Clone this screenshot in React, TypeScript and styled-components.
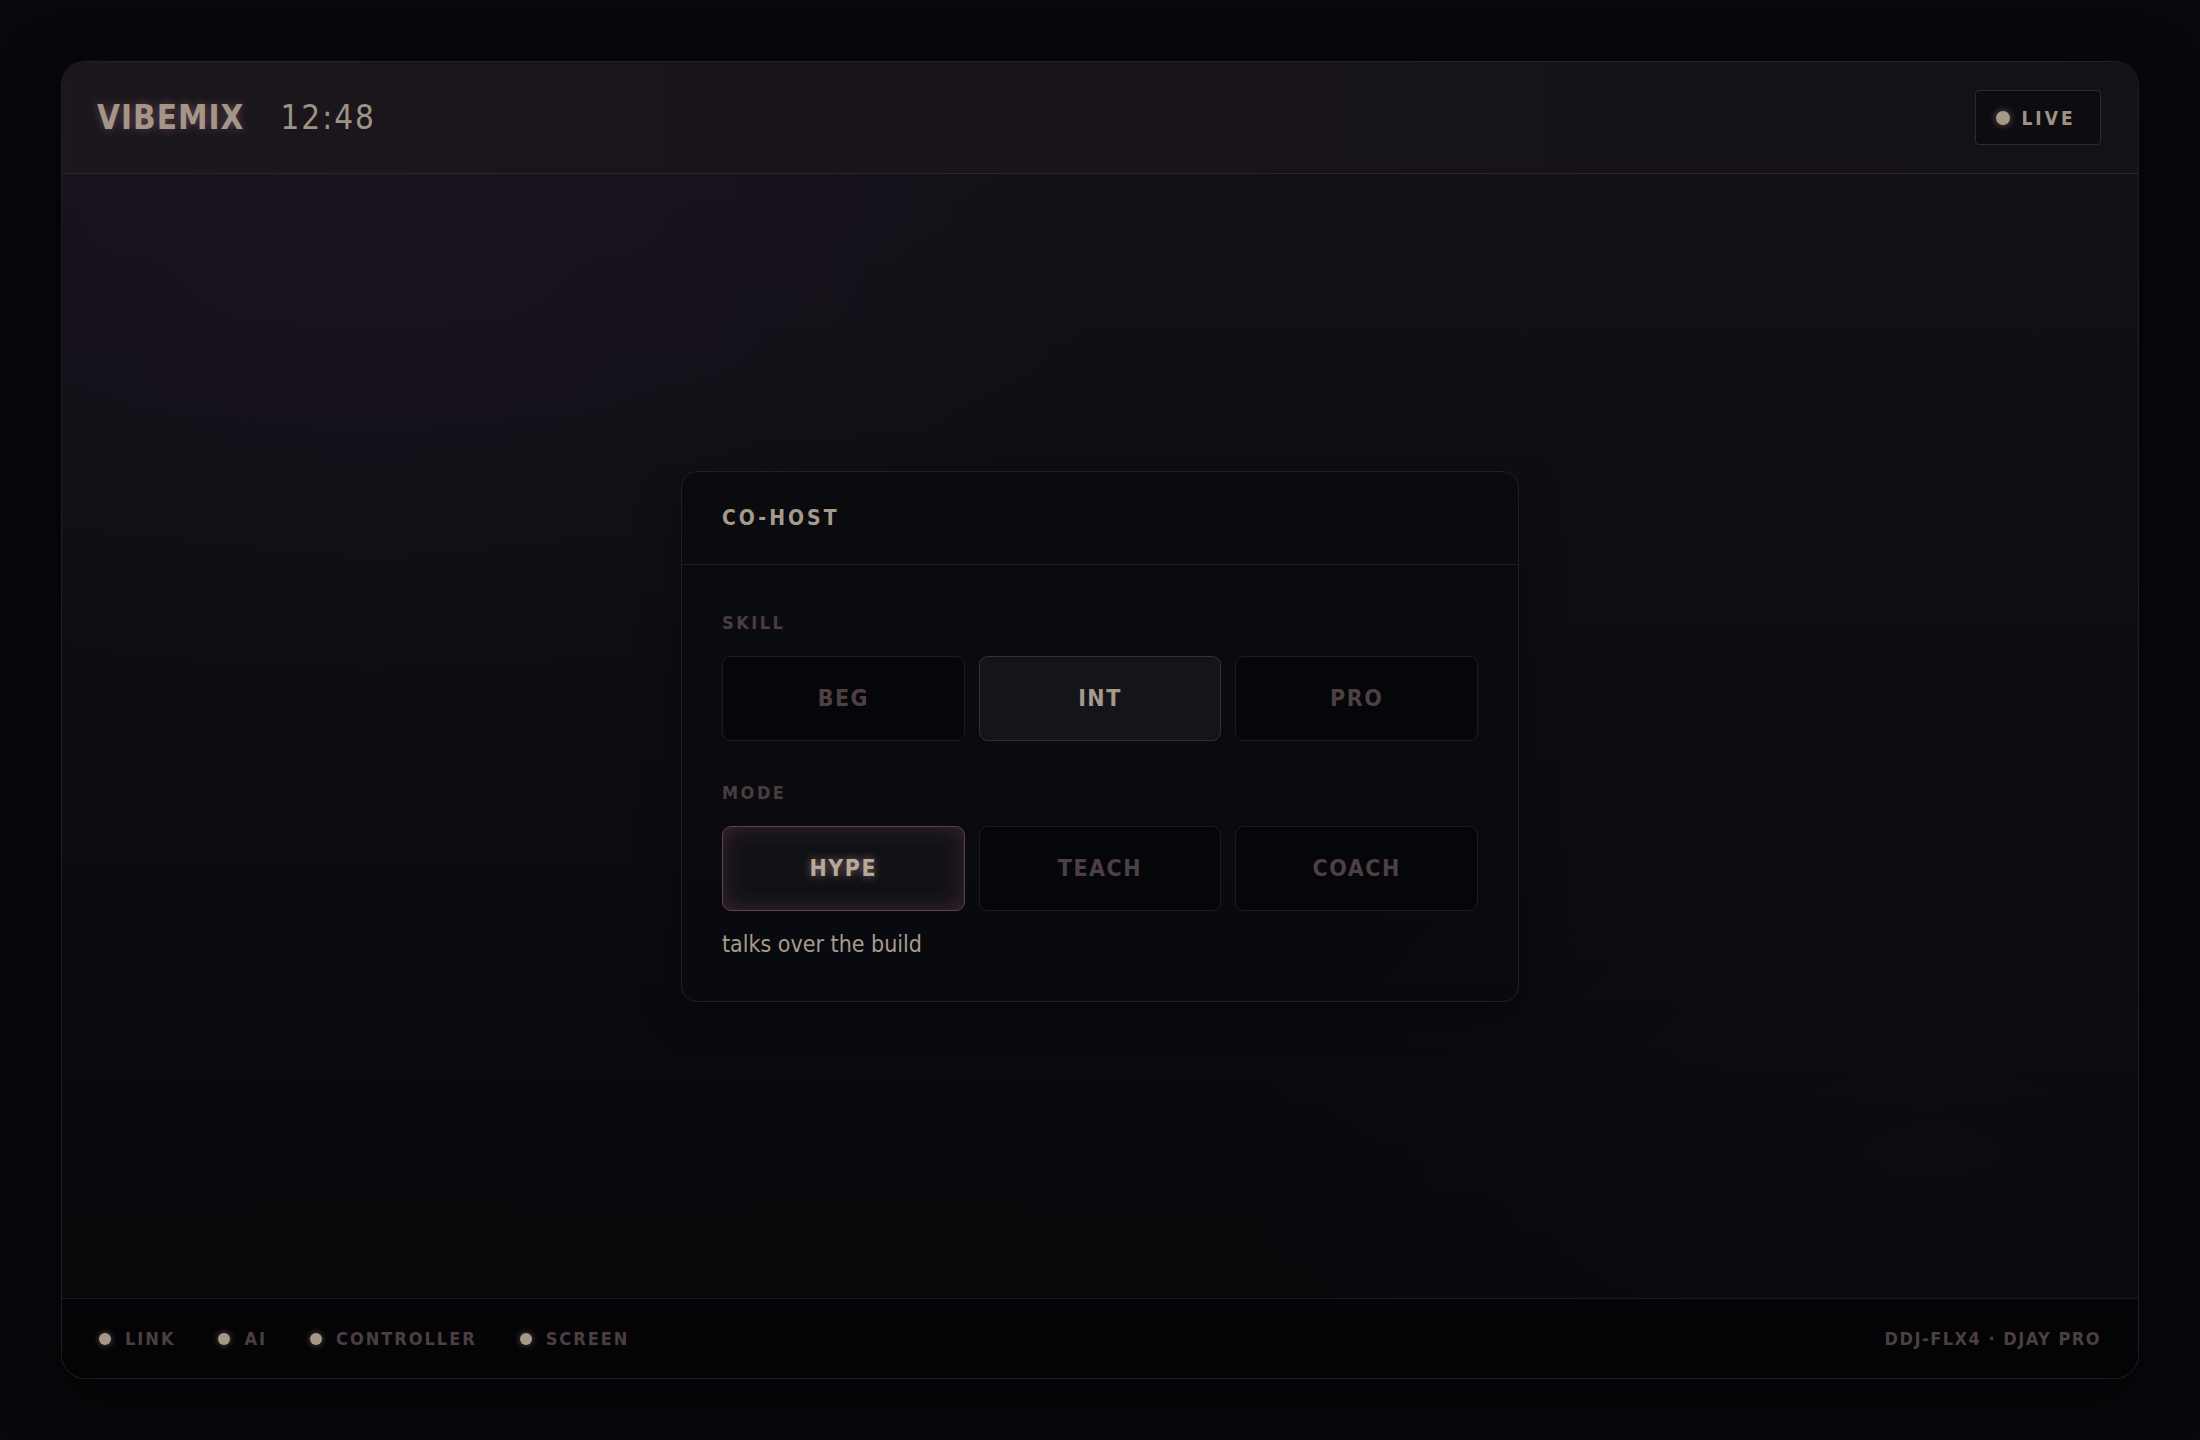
import { useState } from "react"
import styled, { createGlobalStyle } from "styled-components"

const FONT = `"DejaVu Sans Condensed", "DejaVu Sans", "Liberation Sans", sans-serif`

const Global = createGlobalStyle`
  html, body {
    margin: 0;
    padding: 0;
    background: #07080b;
  }
  * { box-sizing: border-box; }
`

const Page = styled.div`
  width: 2200px;
  height: 1440px;
  padding: 61px;
  background: #07080b;
  font-family: ${FONT};
  font-stretch: condensed;
`

const Frame = styled.div`
  height: 100%;
  display: flex;
  flex-direction: column;
  border: 1px solid #1f1e24;
  border-top-color: #262129;
  border-radius: 24px;
  overflow: hidden;
  box-shadow: 0 20px 60px rgba(0, 0, 0, 0.6);
`

const Header = styled.header`
  height: 112px;
  flex: none;
  display: flex;
  align-items: center;
  justify-content: space-between;
  padding: 0 37px 0 35px;
  background: linear-gradient(90deg, #1c161d 0%, #18141a 50%, #131217 100%);
  border-bottom: 1px solid #2e2329;
`

const Brand = styled.div`
  display: flex;
  align-items: center;
  gap: 36px;
`

const Logo = styled.span`
  font-size: 33px;
  font-weight: 700;
  letter-spacing: 1px;
  color: #a39686;
  text-shadow: 0 0 10px rgba(210, 150, 170, 0.35);
`

const Clock = styled.span`
  font-size: 33px;
  font-weight: 400;
  letter-spacing: 2px;
  color: #9e9282;
`

const LiveBadge = styled.div`
  width: 126px;
  height: 55px;
  display: flex;
  align-items: center;
  justify-content: center;
  gap: 11px;
  padding-right: 4px;
  border: 1px solid #3a2630;
  border-radius: 4px;
  background: #0d0d11;
  color: #a09384;
  font-size: 19px;
  font-weight: 700;
  letter-spacing: 3px;
`

const Dot = styled.span<{ $size?: number }>`
  width: ${(p) => p.$size ?? 12}px;
  height: ${(p) => p.$size ?? 12}px;
  border-radius: 50%;
  background: #a69886;
  box-shadow: 0 0 7px rgba(210, 185, 165, 0.45);
  flex: none;
`

const Stage = styled.main`
  flex: 1;
  display: flex;
  align-items: center;
  justify-content: center;
  background:
    radial-gradient(ellipse 1000px 700px at 15% 0%, rgba(40, 26, 48, 0.35), transparent 75%),
    radial-gradient(ellipse 900px 700px at 90% 90%, rgba(14, 17, 26, 0.4), transparent 75%),
    linear-gradient(180deg, #131017 0%, #0e0d12 45%, #08080b 100%);
`

const Card = styled.section`
  width: 838px;
  border: 1px solid #1f1f26;
  border-radius: 16px;
  background: rgba(10, 11, 15, 0.92);
  box-shadow: 0 10px 40px rgba(0, 0, 0, 0.35);
`

const CardHead = styled.div`
  height: 93px;
  display: flex;
  align-items: center;
  padding: 0 40px;
  border-bottom: 1px solid #1f1f26;
  color: #a89a8b;
  font-size: 21px;
  font-weight: 700;
  letter-spacing: 3px;
`

const CardBody = styled.div`
  padding: 48px 40px 44px;
`

const Label = styled.div`
  font-size: 18px;
  font-weight: 700;
  letter-spacing: 2.5px;
  color: #4a3c40;
  line-height: 20px;
  margin-bottom: 23px;
`

const Options = styled.div`
  display: grid;
  grid-template-columns: repeat(3, 1fr);
  gap: 14px;
  margin-bottom: 42px;

  &:last-of-type {
    margin-bottom: 20px;
  }
`

type Tone = "off" | "on" | "hot"

const Option = styled.button<{ $tone: Tone }>`
  height: 85px;
  border-radius: 9px;
  font-family: ${FONT};
  font-stretch: condensed;
  font-size: 23px;
  font-weight: 700;
  letter-spacing: 1.5px;
  cursor: pointer;
  border: 1px solid
    ${(p) => (p.$tone === "hot" ? "#5b454b" : p.$tone === "on" ? "#3a2d35" : "#1c1c22")};
  background: ${(p) => (p.$tone === "hot" ? "#111216" : p.$tone === "on" ? "#141519" : "#050609")};
  color: ${(p) => (p.$tone === "hot" ? "#b6a999" : p.$tone === "on" ? "#a69a8b" : "#4d3f43")};
  box-shadow: ${(p) =>
    p.$tone === "hot" ? "inset 0 0 22px rgba(110, 60, 75, 0.45)" : "none"};
  text-shadow: ${(p) => (p.$tone === "hot" ? "0 0 8px rgba(230, 160, 175, 0.55)" : "none")};
`

const Hint = styled.p`
  margin: 0;
  font-size: 23px;
  color: #a89b8c;
`

const Footer = styled.footer`
  height: 80px;
  flex: none;
  display: flex;
  align-items: center;
  justify-content: space-between;
  padding: 0 37px;
  border-top: 1px solid #1b1a20;
  background: #040406;
`

const Statuses = styled.div`
  display: flex;
  align-items: center;
  gap: 43px;
`

const Status = styled.div`
  display: flex;
  align-items: center;
  gap: 14px;
  font-size: 18px;
  font-weight: 700;
  letter-spacing: 2px;
  color: #4c3f43;
`

const Rig = styled.div`
  font-size: 18px;
  font-weight: 700;
  letter-spacing: 1.5px;
  color: #4a3f43;
`

const skills = ["BEG", "INT", "PRO"]
const modes = ["HYPE", "TEACH", "COACH"]
const hints: Record<string, string> = {
  HYPE: "talks over the build",
  TEACH: "explains each move",
  COACH: "nudges when it matters",
}

export default function App() {
  const [skill, setSkill] = useState("INT")
  const [mode, setMode] = useState("HYPE")

  return (
    <Page>
      <Global />
      <Frame>
        <Header>
          <Brand>
            <Logo>VIBEMIX</Logo>
            <Clock>12:48</Clock>
          </Brand>
          <LiveBadge>
            <Dot $size={14} />
            LIVE
          </LiveBadge>
        </Header>

        <Stage>
          <Card>
            <CardHead>CO-HOST</CardHead>
            <CardBody>
              <Label>SKILL</Label>
              <Options>
                {skills.map((s) => (
                  <Option key={s} $tone={s === skill ? "on" : "off"} onClick={() => setSkill(s)}>
                    {s}
                  </Option>
                ))}
              </Options>
              <Label>MODE</Label>
              <Options>
                {modes.map((m) => (
                  <Option key={m} $tone={m === mode ? "hot" : "off"} onClick={() => setMode(m)}>
                    {m}
                  </Option>
                ))}
              </Options>
              <Hint>{hints[mode]}</Hint>
            </CardBody>
          </Card>
        </Stage>

        <Footer>
          <Statuses>
            {["LINK", "AI", "CONTROLLER", "SCREEN"].map((s) => (
              <Status key={s}>
                <Dot />
                {s}
              </Status>
            ))}
          </Statuses>
          <Rig>DDJ-FLX4 · DJAY PRO</Rig>
        </Footer>
      </Frame>
    </Page>
  )
}
